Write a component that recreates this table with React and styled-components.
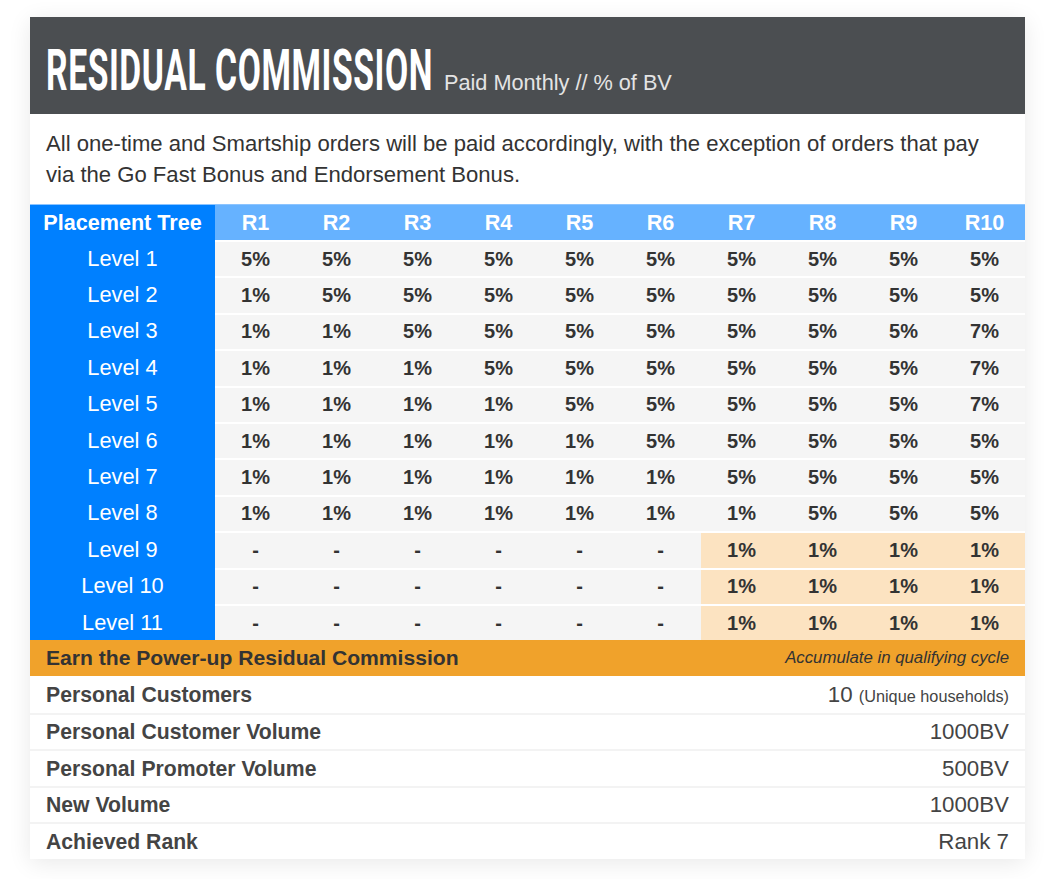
import React from 'react';
import styled, { createGlobalStyle } from 'styled-components';

const GlobalStyle = createGlobalStyle`
  html, body {
    margin: 0;
    padding: 0;
    background: #ffffff;
  }
  body {
    font-family: "Liberation Sans", Arial, sans-serif;
    color: #333;
  }
`;

const Page = styled.div`
  padding: 17px 20px 21px 30px;
`;

const Card = styled.div`
  background: #fff;
  box-shadow: 0 4px 22px rgba(0, 0, 0, 0.09);
`;

const Header = styled.div`
  height: 97px;
  background: #4b4e51;
  display: flex;
  align-items: flex-end;
  padding: 0 16px 20px;
  box-sizing: border-box;
`;

const TitleBox = styled.div`
  width: 398px;
  flex-shrink: 0;
  height: 48px;
`;

const Title = styled.h1`
  margin: 0;
  font-family: Roboto, "Liberation Sans", sans-serif;
  font-weight: 700;
  font-size: 57px;
  line-height: 50px;
  color: #fff;
  white-space: nowrap;
  display: inline-block;
  transform: scaleX(0.59);
  transform-origin: left bottom;
  letter-spacing: 1px;
`;

const Subtitle = styled.span`
  font-size: 21.7px;
  color: #e4e4e4;
  line-height: 24px;
  margin-bottom: -1px;
`;

const Intro = styled.p`
  margin: 0;
  padding: 14px 16px 14px;
  font-size: 22.1px;
  line-height: 31px;
  color: #333;
`;

const Grid = styled.div`
  display: grid;
  grid-template-columns: 185px repeat(10, 1fr);
`;

const HeadCell = styled.div`
  height: 36px;
  display: flex;
  align-items: center;
  justify-content: center;
  font-weight: 700;
  font-size: 21.6px;
  color: #fff;
  background: ${p => (p.$first ? '#0080ff' : '#66b2ff')};
  border-top: 1px solid #8cc4ff;
  box-sizing: border-box;
`;

const LevelCell = styled.div`
  height: 36.4px;
  display: flex;
  align-items: center;
  justify-content: center;
  background: #0080ff;
  color: #fff;
  font-size: 21.8px;
  padding-top: 1px;
  box-sizing: border-box;
`;

const ValueCell = styled.div`
  height: 36.4px;
  display: flex;
  align-items: center;
  justify-content: center;
  background: ${p => (p.$hl ? '#fce3c1' : '#f5f5f5')};
  border-top: 2px solid #fff;
  box-sizing: border-box;
  font-weight: 700;
  font-size: 20px;
  color: #333;
`;

const PowerBar = styled.div`
  height: 36px;
  background: #f0a22b;
  display: flex;
  align-items: center;
  justify-content: space-between;
  padding: 0 16px;
`;

const PowerTitle = styled.span`
  font-weight: 700;
  font-size: 21.1px;
  color: #333;
`;

const PowerNote = styled.span`
  font-style: italic;
  font-size: 16.8px;
  color: #333;
`;

const ReqRow = styled.div`
  height: 36.5px;
  display: flex;
  align-items: center;
  justify-content: space-between;
  padding: 0 16px;
  box-sizing: border-box;
  border-top: ${p => (p.$first ? 'none' : '2px solid #f3f3f3')};
`;

const ReqLabel = styled.span`
  font-weight: 700;
  font-size: 21.2px;
  color: #444;
`;

const ReqValue = styled.span`
  font-size: 22.3px;
  color: #444;
`;

const Small = styled.small`
  font-size: 16.3px;
`;

const ranks = ['R1', 'R2', 'R3', 'R4', 'R5', 'R6', 'R7', 'R8', 'R9', 'R10'];

const levels = [
  ['5%', '5%', '5%', '5%', '5%', '5%', '5%', '5%', '5%', '5%'],
  ['1%', '5%', '5%', '5%', '5%', '5%', '5%', '5%', '5%', '5%'],
  ['1%', '1%', '5%', '5%', '5%', '5%', '5%', '5%', '5%', '7%'],
  ['1%', '1%', '1%', '5%', '5%', '5%', '5%', '5%', '5%', '7%'],
  ['1%', '1%', '1%', '1%', '5%', '5%', '5%', '5%', '5%', '7%'],
  ['1%', '1%', '1%', '1%', '1%', '5%', '5%', '5%', '5%', '5%'],
  ['1%', '1%', '1%', '1%', '1%', '1%', '5%', '5%', '5%', '5%'],
  ['1%', '1%', '1%', '1%', '1%', '1%', '1%', '5%', '5%', '5%'],
  ['-', '-', '-', '-', '-', '-', '1%', '1%', '1%', '1%'],
  ['-', '-', '-', '-', '-', '-', '1%', '1%', '1%', '1%'],
  ['-', '-', '-', '-', '-', '-', '1%', '1%', '1%', '1%'],
];

const requirements = [
  ['Personal Customers', <>10 <Small>(Unique households)</Small></>],
  ['Personal Customer Volume', '1000BV'],
  ['Personal Promoter Volume', '500BV'],
  ['New Volume', '1000BV'],
  ['Achieved Rank', 'Rank 7'],
];

export default function App() {
  return (
    <Page>
      <GlobalStyle />
      <Card>
        <Header>
          <TitleBox>
            <Title>RESIDUAL COMMISSION</Title>
          </TitleBox>
          <Subtitle>Paid Monthly // % of BV</Subtitle>
        </Header>
        <Intro>
          All one-time and Smartship orders will be paid accordingly, with the exception of orders that pay
          via the Go Fast Bonus and Endorsement Bonus.
        </Intro>
        <Grid>
          <HeadCell $first>Placement Tree</HeadCell>
          {ranks.map(r => (
            <HeadCell key={r}>{r}</HeadCell>
          ))}
          {levels.map((row, i) => (
            <React.Fragment key={i}>
              <LevelCell>Level {i + 1}</LevelCell>
              {row.map((v, j) => (
                <ValueCell key={j} $hl={i >= 8 && j >= 6}>{v}</ValueCell>
              ))}
            </React.Fragment>
          ))}
        </Grid>
        <PowerBar>
          <PowerTitle>Earn the Power-up Residual Commission</PowerTitle>
          <PowerNote>Accumulate in qualifying cycle</PowerNote>
        </PowerBar>
        {requirements.map(([label, value], i) => (
          <ReqRow key={label} $first={i === 0}>
            <ReqLabel>{label}</ReqLabel>
            <ReqValue>{value}</ReqValue>
          </ReqRow>
        ))}
      </Card>
    </Page>
  );
}
